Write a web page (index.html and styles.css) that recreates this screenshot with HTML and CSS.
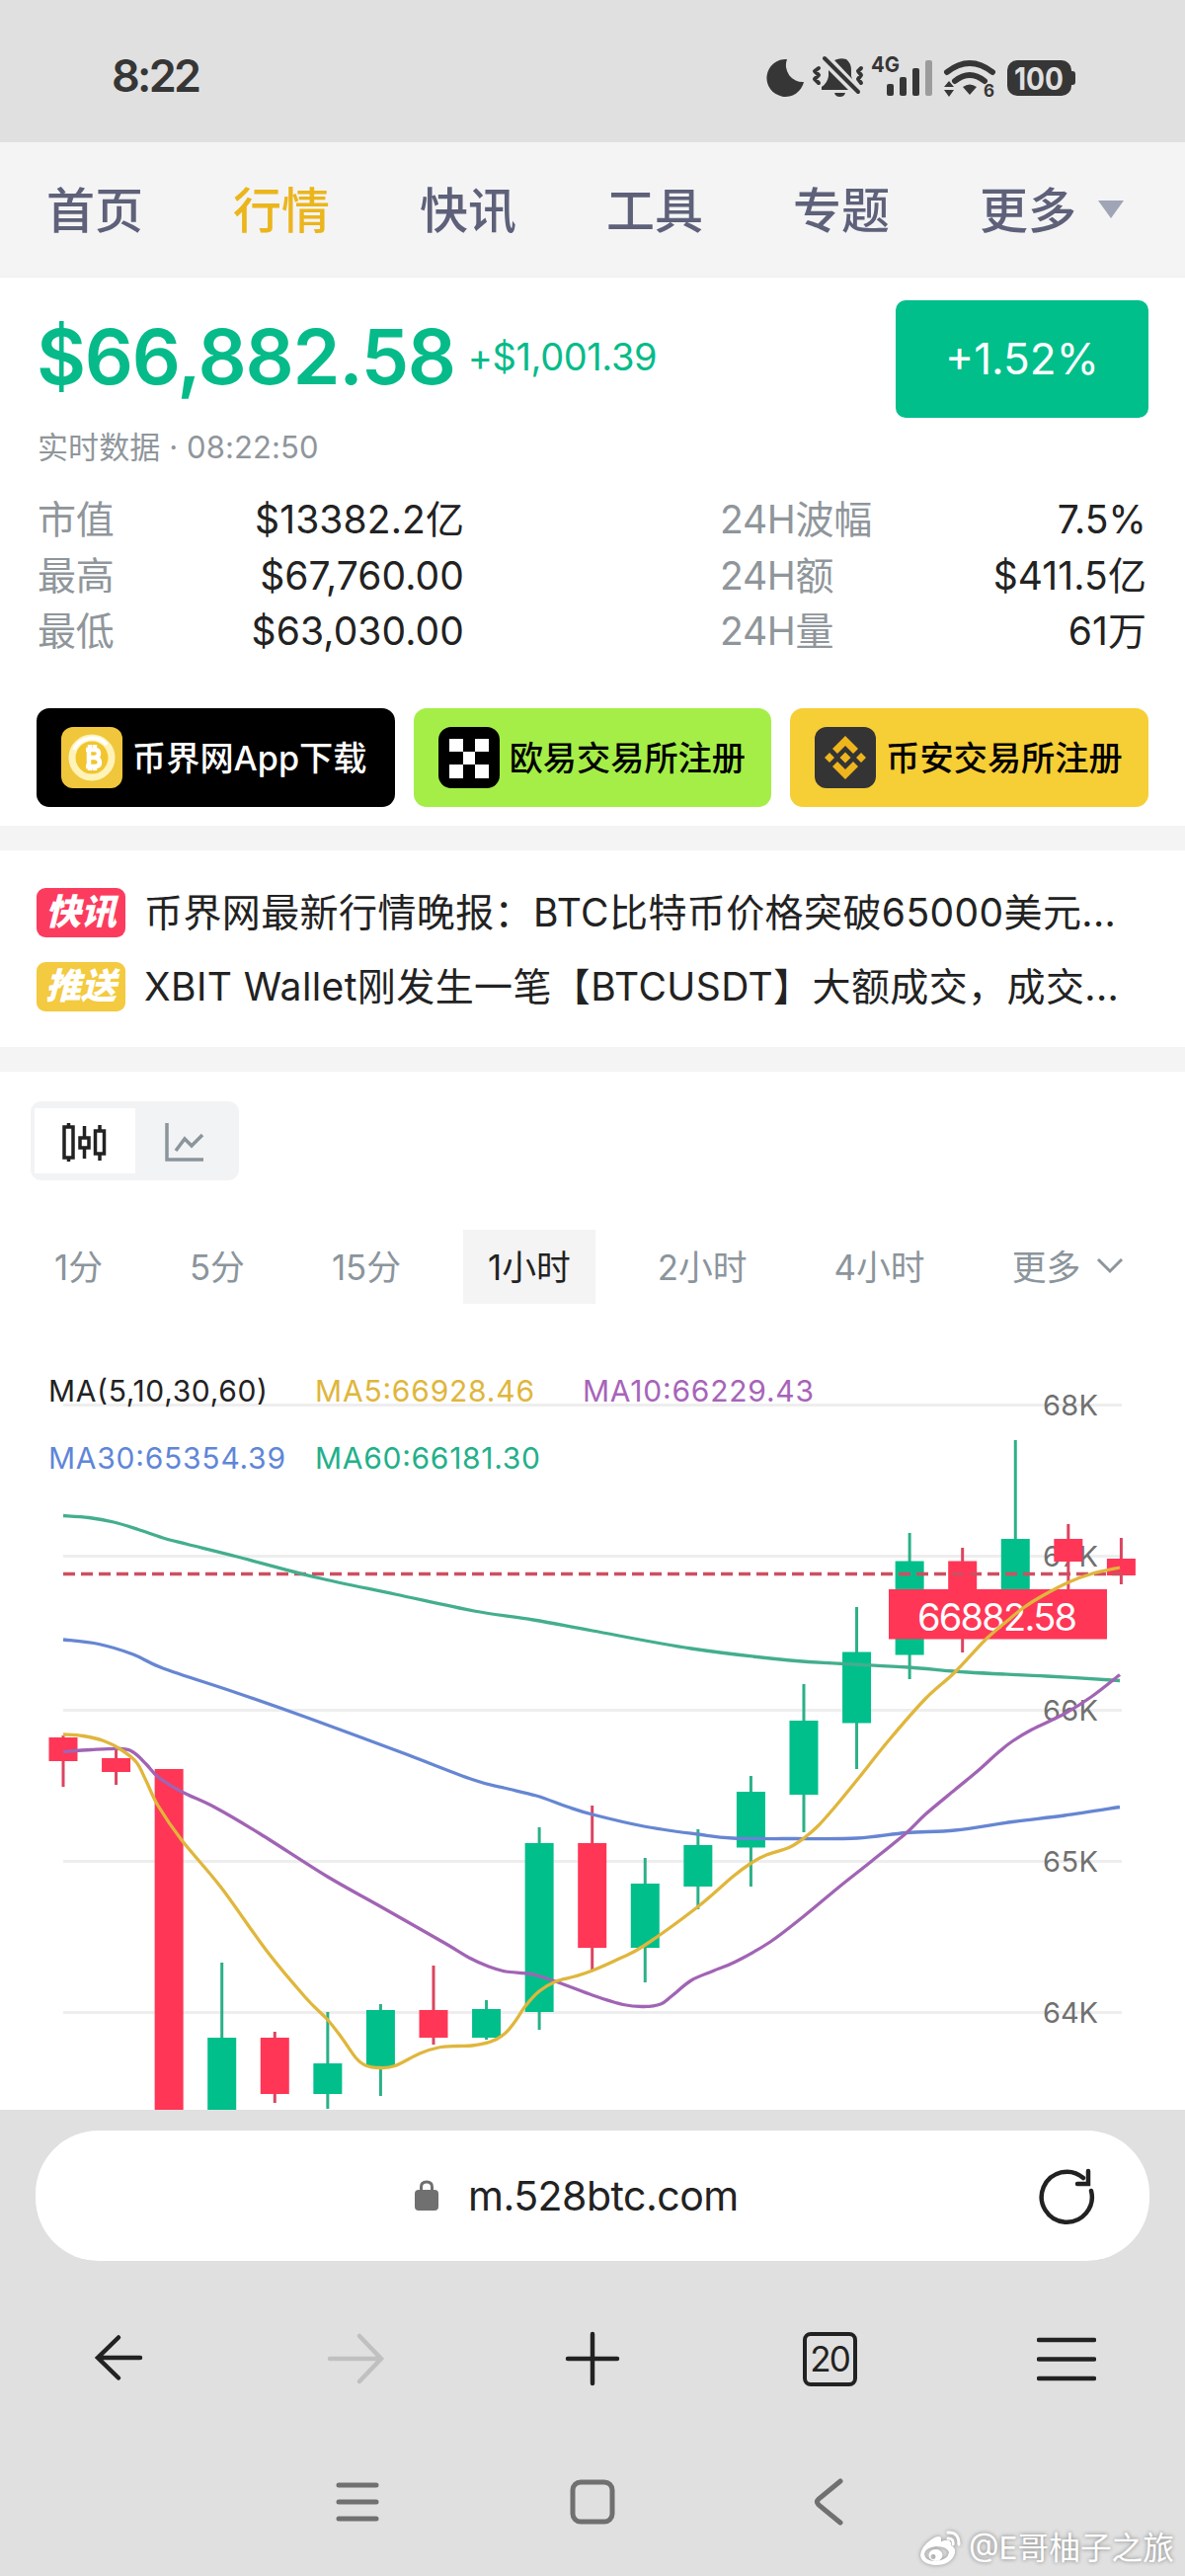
FILE: index.html
```html
<!DOCTYPE html>
<html lang="zh-CN">
  <head>
    <meta charset="UTF-8" />
    <meta name="viewport" content="width=device-width, initial-scale=1.0" />
    <title>BTC 行情</title>
    <link rel="stylesheet" href="styles.css">
  </head>
  <body>
    <div class="status">
      <span class="time">8:22</span>
      <svg class="status-icons" viewBox="0 0 320 50" width="320" height="50">
        <path class="ink" d="M22 8A19 19 0 1 0 39 31A17 17 0 0 1 22 8Z" />
        <g class="ink">
          <path d="M57 39V36Q63 32 64 25V19L84 39ZM70 9Q76 6 82 8Q87 12 87 19V25L88 28Z" />
          <path d="M70 42H81Q80 46 75.500 46Q71 46 70 42Z" />
        </g>
        <path class="line" stroke-width="4" d="M60 7L94 41" />
        <path class="line" stroke-width="4" d="M54 17L50 20L54 24L50 28L54 32M97 17L94 20L97 24L94 28L97 32" />
        <text x="107" y="21" font-size="22" font-weight="700" textLength="29" lengthAdjust="spacingAndGlyphs">4G</text>
        <rect class="ink" x="123" y="33" width="7" height="12" rx="2" />
        <rect class="ink" x="136" y="26" width="7" height="19" rx="2" />
        <rect class="ink" x="149" y="17" width="7" height="28" rx="2" />
        <rect fill="#9c9c9c" x="162" y="9" width="7" height="36" rx="2" />
        <path class="line" stroke-width="6" stroke-linecap="butt" d="M184 21Q207 3 230 21M192 30Q207 18 222 30" />
        <path class="ink" d="M200 36Q207 31 214 36L207 44ZM181 36L186 30L191 36ZM181 39H191L186 46Z" />
        <text x="221" y="46" font-size="17" font-weight="700">6</text>
        <rect class="ink" x="245" y="9" width="65" height="36" rx="10" />
        <rect class="ink" x="306" y="20" width="8" height="14" rx="3" />
        <text x="252" y="38.500" font-size="31" font-weight="700" fill="#e0e0e0" textLength="50" lengthAdjust="spacingAndGlyphs">100</text>
      </svg>
    </div>

    <nav>
      <a>首页</a>
      <a class="active">行情</a>
      <a>快讯</a>
      <a>工具</a>
      <a>专题</a>
      <a>更多<i class="caret"></i></a>
    </nav>

    <section class="quote">
      <div class="quote-top">
        <div>
          <div class="price"><b>$66,882.58</b><span>+$1,001.39</span></div>
          <p>实时数据 · 08:22:50</p>
        </div>
        <div class="percent">+1.52%</div>
      </div>
      <div class="stats">
        <dl>
          <dt>市值</dt><dd>$13382.2亿</dd>
          <dt>最高</dt><dd>$67,760.00</dd>
          <dt>最低</dt><dd>$63,030.00</dd>
        </dl>
        <dl>
          <dt>24H波幅</dt><dd>7.5%</dd>
          <dt>24H额</dt><dd>$411.5亿</dd>
          <dt>24H量</dt><dd>61万</dd>
        </dl>
      </div>
      <div class="links">
        <a class="app">
          <svg viewBox="0 0 62 62">
            <rect width="62" height="62" rx="12" fill="#f0c63c" />
            <circle cx="31" cy="31" r="20" fill="#f2c52f" stroke="#fff3b8" stroke-width="7" />
            <path d="M13 23A20 20 0 0 1 46 18" fill="none" stroke="#fff" stroke-width="4" />
            <path d="M25 23H34Q38 23 38 27Q38 30 34.500 31Q39 32 39 36Q39 40 34 40H25M28 23V40M28 31H35M29 18V23M34 18V23M29 40V44M34 40V44" fill="none" stroke="#fff" stroke-width="4.500" />
          </svg>
          <span>币界网App下载</span>
        </a>
        <a class="okx">
          <svg viewBox="0 0 62 62">
            <rect width="62" height="62" rx="13" />
            <path d="M11 12h14v13h-14zM37 12h14v13h-14zM25 25h12v13h-12zM11 38h14v14h-14zM37 38h14v14h-14z" fill="#fff" />
          </svg>
          <span>欧易交易所注册</span>
        </a>
        <a class="binance">
          <svg viewBox="0 0 62 62">
            <rect width="62" height="62" rx="12" fill="#343434" />
            <g fill="#efb51d">
              <path d="M31 9L44 22L39 27L31 19L23 27L18 22Z" />
              <path d="M31 53L44 40L39 35L31 43L23 35L18 40Z" />
              <path d="M31 25.500L36.500 31L31 36.500L25.500 31ZM15 26L20 31L15 36L10 31ZM47 26L52 31L47 36L42 31Z" />
            </g>
          </svg>
          <span>币安交易所注册</span>
        </a>
      </div>
    </section>

    <section class="news">
      <div><span class="tag"><em>快讯</em></span><p>币界网最新行情晚报：BTC比特币价格突破65000美元...</p></div>
      <div><span class="tag push"><em>推送</em></span><p>XBIT Wallet刚发生一笔【BTCUSDT】大额成交，成交...</p></div>
    </section>

    <section class="kline">
      <div class="switch">
        <button aria-label="candles" class="on">
          <svg viewBox="0 0 46 40" width="46" height="40">
            <path d="M6.500 0V4M6.500 35V39M2 4H11V35H2ZM22.500 3V15M22.500 25V36M18 15H27V25H18ZM38 2V8M38 31V38M33.500 8H42.500V31H33.500Z" fill="none" stroke="#222" stroke-width="3.500" />
          </svg>
        </button>
        <button aria-label="line">
          <svg viewBox="0 0 40 40" width="40" height="40">
            <path d="M2 0V37H39M11 28L20 16L27 23L38 12" fill="none" stroke="#8b959c" stroke-width="3.500" />
          </svg>
        </button>
      </div>
      <div class="periods">
        <span>1分</span>
        <span>5分</span>
        <span>15分</span>
        <span class="on">1小时</span>
        <span>2小时</span>
        <span>4小时</span>
        <span>更多<svg viewBox="0 0 28 18" width="28" height="18"><path d="M2 3L14 15L26 3" fill="none" stroke="#8b959c" stroke-width="3" /></svg></span>
      </div>
      <!-- y axis runs in page pixels, 1340 is the top of the chart -->
      <svg class="chart" viewBox="0 1340 1200 796" width="1200" height="796">
        <g id="grid"></g>
        <g id="candles"></g>
        <path class="last" d="M64 1593.500H1136" />
        <rect x="900" y="1609" width="221" height="50.500" fill="#ff3656" />
        <text x="929" y="1650.500" font-size="38" fill="#fff" textLength="162">66882.58</text>
        <g id="lines"></g>
        <g class="legend" font-size="30">
          <text x="49" y="1418.500" fill="#222" textLength="222">MA(5,10,30,60)</text>
          <text x="319" y="1418.500" fill="#e0b63c" textLength="222">MA5:66928.46</text>
          <text x="590" y="1418.500" fill="#a764b9" textLength="234">MA10:66229.43</text>
          <text x="49" y="1487" fill="#5f86d8" textLength="240">MA30:65354.39</text>
          <text x="319" y="1487" fill="#22b08a" textLength="228">MA60:66181.30</text>
        </g>
      </svg>
    </section>

    <footer>
      <div class="address">
        <svg class="lock" viewBox="0 0 24 32" width="24" height="32">
          <rect y="10" width="24" height="21" rx="4" fill="#707070" />
          <path d="M6.500 12V7Q6.500 2 12 2Q17.500 2 17.500 7V12" fill="none" stroke="#707070" stroke-width="3" />
        </svg>
        <span>m.528btc.com</span>
        <svg class="reload" viewBox="0 0 60 60" width="60" height="60">
          <path d="M55 25A25.500 25.500 0 1 1 47 12" />
          <path d="M52 5V18H41" />
        </svg>
      </div>
      <div class="toolbar">
        <svg viewBox="0 0 60 60"><path d="M52 29H10M30 8.500L9 29L30 49.500" /></svg>
        <svg viewBox="0 0 60 60" class="off"><path d="M4 30H55M34 7L56 30L34 53" /></svg>
        <svg viewBox="0 0 60 60"><path d="M5 30H55M30 5V55" /></svg>
        <span class="tabs">20</span>
        <svg viewBox="0 0 60 60"><path d="M2 11H58M2 30.500H58M2 50H58" /></svg>
      </div>
      <div class="system">
        <svg viewBox="0 0 50 50"><path d="M7 8H45M7 25H45M7 42H45" /></svg>
        <svg viewBox="0 0 50 50"><rect x="5" y="5" width="40" height="40" rx="8" /></svg>
        <svg viewBox="0 0 50 50"><path d="M37 4L15 22Q12 25 15 28L37 46" /></svg>
      </div>
      <div class="watermark">
        <svg viewBox="0 0 42 36" width="42" height="36">
          <path fill="#fff" fill-rule="evenodd" d="M11 9Q18 4 21 7L21 11Q32 7 31 15Q36 17 35 23Q31 35 16 35Q1 34 0 25Q1 16 11 9ZM16 16Q5 17 4 24Q5 31 15 31Q28 30 29 22Q27 16 16 16ZM15 19A7 6 0 1 0 16 31A7 6 0 1 0 15 19ZM13 24A2.500 2.500 0 1 1 12.900 24Z" />
          <path d="M28 2Q39 1 39 14M28 8Q34 8 33 14" fill="none" stroke="#fff" stroke-width="3" stroke-linecap="round" />
        </svg>
        @E哥柚子之旅
      </div>
    </footer>

    <script>
      const d = document,
        STEP = 53.57,
        START = 64;

      // high, body top, body bottom, low, up?
      const candles = [
        [1757, 1759, 1783, 1809, 0],
        [1770, 1780, 1794, 1807, 0],
        [1791, 1791, 2150, 2150, 0],
        [1987, 2063, 2150, 2150, 1],
        [2057, 2063, 2120, 2129, 0],
        [2037, 2089, 2120, 2135, 1],
        [2029, 2035, 2092, 2122, 1],
        [1990, 2035, 2063, 2070, 0],
        [2025, 2034, 2063, 2065, 1],
        [1850, 1866, 2037, 2055, 1],
        [1828, 1866, 1972, 1995, 0],
        [1881, 1907, 1972, 2007, 1],
        [1852, 1868, 1910, 1933, 1],
        [1798, 1814, 1870.5, 1910, 1],
        [1705, 1742, 1817, 1855, 1],
        [1627, 1672.5, 1744.5, 1791, 1],
        [1552, 1580.5, 1675.5, 1700, 1],
        [1567, 1580.5, 1640, 1673, 0],
        [1458, 1558, 1640, 1645, 1],
        [1543, 1558, 1581, 1612, 0],
        [1557, 1578, 1595, 1604, 0],
      ];

      const averages = {
        "#43ae8e": [[64,1534.5],[90,1536.5],[115,1541],[140,1548.5],[165,1557],[190,1563.5],[240,1576],[320,1597],[400,1614],[480,1631],[540,1640],[600,1651],[700,1669],[800,1681],[855,1684.5],[920,1688],[980,1693],[1060,1697],[1134,1701.5]],
        "#6686d3": [[64,1660],[100,1664.5],[135,1675],[165,1689],[240,1714],[314,1740],[406,1774],[478,1801.5],[510,1810],[543,1818],[574,1829],[600,1837],[652,1849],[706,1857],[742,1861],[805,1861.5],[868,1861],[918,1855.5],[967,1853],[1025,1844.5],[1078,1838],[1134,1829.5]],
        "#a164b4": [[64,1773.5],[92,1771.5],[122,1770.5],[135,1774],[148,1786],[160,1799],[184,1814],[218,1830],[264,1857],[330,1899],[385,1930],[450,1967],[475,1982],[495,1991],[512,1996],[540,1999],[568,2008],[600,2020],[631,2029.5],[652,2031.5],[669,2029],[680,2021],[700,2005],[722,1995.5],[745,1986],[780,1966],[814,1940],[849,1911],[883,1884],[918,1855.5],[937,1837],[967,1812],[990,1793],[1010,1775],[1025,1763],[1045,1751],[1078,1735],[1105,1718],[1134,1695.5]],
        "#e0b63c": [[64,1756],[84,1757.5],[105,1762.5],[122,1771],[138,1784],[148,1803],[160,1828],[184,1863],[224,1911],[270,1975],[310,2023],[331,2044],[346,2063],[360,2083],[370,2091],[385,2093.5],[400,2091.5],[425,2079],[444,2073],[463,2071.5],[478,2071],[497,2067],[511,2059],[522,2046],[532,2031],[546,2016],[563,2006],[582,2001],[600,1995],[627,1983],[652,1970],[706,1931],[742,1900],[761,1886],[776,1878],[799,1870.5],[814,1861],[828,1849],[845,1830],[868,1802],[900,1762],[937,1720],[967,1693],[998,1660],[1020,1641],[1036,1628],[1055,1616],[1082,1602],[1105,1593.5],[1134,1587]],
      };

      const gridlines = [[1422.5, "68K"], [1575.5, "67K"], [1731.5, "66K"], [1884.5, "65K"], [2037.5, "64K"]];

      d.getElementById("grid").innerHTML = gridlines
        .map(([y, label]) => `<path d="M64 ${y}H1136" /><text x="1056" y="${y + 10}" textLength="56">${label}</text>`)
        .join("");

      d.getElementById("candles").innerHTML = candles
        .map(([high, top, bottom, low, up], i) => {
          const x = START + i * STEP;
          return `<g class="${up ? "up" : "down"}"><path d="M${x} ${high}V${low}" /><rect x="${x - 14.5}" y="${top}" width="29" height="${bottom - top}" /></g>`;
        })
        .join("");

      // smooth curve through the points
      function curve(p) {
        let path = `M${p[0]}`;
        for (let i = 0; i < p.length - 1; i++) {
          const a = p[i - 1] ?? p[i], b = p[i], c = p[i + 1], e = p[i + 2] ?? c;
          path += `C${b[0] + (c[0] - a[0]) / 6} ${b[1] + (c[1] - a[1]) / 6} ${c[0] - (e[0] - b[0]) / 6} ${c[1] - (e[1] - b[1]) / 6} ${c}`;
        }
        return path;
      }

      d.getElementById("lines").innerHTML = Object.entries(averages)
        .map(([color, points]) => `<path d="${curve(points)}" stroke="${color}" />`)
        .join("");
    </script>
  </body>
</html>
```
FILE: styles.css
```css
*,
*::before,
*::after {
  box-sizing: border-box;
  margin: 0;
  padding: 0;
}
body {
  width: 1200px;
  height: 2608px;
  overflow: hidden;
  display: flex;
  flex-direction: column;
  background-color: #fff;
  color: #222;
  font-family: Inter, "Noto Sans CJK SC", sans-serif;
}
svg {
  display: block;
  flex-shrink: 0;
}

.status {
  height: 144px;
  padding: 9px 82px 0 113px;
  display: flex;
  align-items: center;
  justify-content: space-between;
  background-color: #e0e0e0;
  color: #363636;

  & .time {
    font-size: 45px;
    font-weight: 600;
    letter-spacing: -2.7px;
  }
  & .status-icons {
    margin-right: 23px;
    fill: #363636;
  }
  & .line {
    fill: none;
    stroke: #363636;
    stroke-linecap: round;
    stroke-linejoin: round;
  }
}

nav {
  height: 137px;
  padding: 0 0 6px 47px;
  display: flex;
  align-items: center;
  background-color: #f4f4f5;
  border-bottom: 1px solid #efefef;

  & a {
    width: 189px;
    flex-shrink: 0;
    display: flex;
    align-items: center;
    font-size: 49px;
    font-weight: 500;
    color: #5e6179;
    white-space: nowrap;
  }
  & .active {
    color: #ebb51c;
  }
  & .caret {
    margin: 5px 0 0 22px;
    border: 13px solid transparent;
    border-top: 18px solid #9fa5b5;
    border-bottom: 0;
  }
}

.quote {
  height: 555px;
  padding: 23px 37px 0;
}
.quote-top {
  height: 193px;
  display: flex;
  justify-content: space-between;

  & .price {
    height: 114px;
    display: flex;
    align-items: center;
    color: #06bb89;
  }
  & .price b {
    font-size: 77px;
    font-weight: 600;
    letter-spacing: -1.3px;
  }
  & .price span {
    margin-left: 13px;
    font-size: 38px;
    letter-spacing: -0.4px;
  }
  & p {
    padding-left: 1px;
    margin-top: 10px;
    font-size: 31px;
    line-height: 50px;
    letter-spacing: 0.1px;
    color: #8f969b;
  }
  & .percent {
    width: 256px;
    height: 119px;
    border-radius: 10px;
    background-color: #00bf8b;
    color: #fff;
    font-size: 44px;
    line-height: 118px;
    text-align: center;
  }
}
.stats {
  display: flex;
  justify-content: space-between;
  padding: 1px 2px 0 1px;

  & dl {
    width: 432px;
    display: grid;
    grid-template-columns: auto 1fr;
    grid-auto-rows: 56.5px;
    font-size: 39px;
    line-height: 56px;
  }
  & dt {
    letter-spacing: -0.3px;
    color: #8f969b;
  }
  & dd {
    letter-spacing: 0.1px;
    text-align: right;
  }
}
.links {
  display: flex;
  gap: 19px;
  margin-top: 49px;

  & a {
    flex: 1;
    height: 100px;
    padding-left: 25px;
    display: flex;
    align-items: center;
    gap: 10px;
    border-radius: 13px;
    font-size: 34.2px;
    font-weight: 500;
    color: #000;
    white-space: nowrap;
  }
  & span {
    padding-bottom: 3px;
  }
  & svg {
    width: 62px;
    height: 62px;
  }
  & .app {
    background-color: #000;
    color: #fff;
  }
  & .okx {
    background-color: #a5ee48;
  }
  & .binance {
    background-color: #f6ce36;
  }
}

.news {
  height: 249px;
  padding: 25px 37px 0;
  border: solid #f4f4f4;
  border-width: 25px 0;

  & div {
    height: 75px;
    display: flex;
    align-items: center;
    gap: 19px;
  }
  & .tag {
    width: 90px;
    height: 50px;
    border-radius: 9px;
    background-color: #fc3c5e;
    color: #fff;
    font-size: 36px;
    font-weight: 900;
    line-height: 48px;
    text-align: center;
  }
  & .push {
    background-color: #f3ca40;
  }
  & p {
    padding-bottom: 6px;
    font-size: 39px;
    letter-spacing: 0.4px;
    white-space: nowrap;
  }
}

.kline {
  height: 1051px;
}
.switch {
  width: 211px;
  height: 80px;
  margin: 30px 0 0 31px;
  padding: 7px 4px;
  display: flex;
  border-radius: 11px;
  background-color: #f2f3f4;

  & button {
    flex: 1;
    padding-top: 4px;
    display: grid;
    place-content: center;
    border: none;
    background: none;
  }
  & .on {
    background-color: #fff;
  }
}
.periods {
  height: 75px;
  margin: 50px 0 20px 30px;
  display: flex;
  gap: 38px;

  & span {
    padding: 0 25px 4px;
    display: flex;
    align-items: center;
    gap: 16px;
    font-size: 34.8px;
    color: #8b959c;
    white-space: nowrap;
  }
  & .on {
    background-color: #f4f4f4;
    color: #222;
  }
}
.chart {
  & #grid path {
    stroke: #eee;
    stroke-width: 3;
  }
  & #grid text {
    font-size: 29px;
    fill: #707070;
  }
  & .up {
    fill: #00bf8b;
    stroke: #2bb088;
  }
  & .down {
    fill: #ff3656;
    stroke: #db4560;
  }
  & #candles path {
    stroke-width: 3;
  }
  & #candles rect {
    stroke: none;
  }
  & .last {
    stroke: #cf4f62;
    stroke-width: 3.4;
    stroke-dasharray: 12 6;
  }
  & #lines path {
    fill: none;
    stroke-width: 3.3;
  }
}

footer {
  position: relative;
  height: 472px;
  padding-top: 21px;
  background-color: #e0e0e0;
}
.address {
  width: 1128px;
  height: 132px;
  margin: 0 auto;
  padding: 0 54px 0 384px;
  display: flex;
  align-items: center;
  border-radius: 64px;
  background-color: #fff;

  & span {
    margin-left: 30px;
    font-size: 41px;
    letter-spacing: -0.5px;
  }
  & .reload {
    margin-left: auto;
    fill: none;
    stroke: #222;
    stroke-width: 4.5;
    stroke-linecap: round;
  }
}
.toolbar {
  height: 198px;
  display: grid;
  grid-template-columns: repeat(5, 240px);
  place-items: center;

  & svg {
    width: 60px;
    height: 60px;
    fill: none;
    stroke: #222;
    stroke-width: 4.5;
    stroke-linecap: round;
  }
  & .off {
    stroke: #c0c0c0;
  }
  & .tabs {
    width: 55px;
    height: 55px;
    border: 4px solid #222;
    border-radius: 8px;
    font-size: 35px;
    line-height: 47px;
    letter-spacing: -2px;
    text-align: center;
  }
}
.system {
  height: 92px;
  display: flex;
  justify-content: center;
  align-items: center;
  gap: 189px;

  & svg {
    width: 50px;
    height: 50px;
    fill: none;
    stroke: #707070;
    stroke-width: 5;
    stroke-linecap: round;
  }
}
/* lies over the system bar */
.watermark {
  position: absolute;
  right: 11px;
  bottom: 8px;
  display: flex;
  align-items: center;
  gap: 7px;
  font-size: 31.7px;
  line-height: 40px;
  color: #fff;
  text-shadow: 0 0 4px rgba(0, 0, 0, 0.45);

  & svg {
    filter: drop-shadow(0 0 2px rgba(0, 0, 0, 0.35));
  }
}
```
